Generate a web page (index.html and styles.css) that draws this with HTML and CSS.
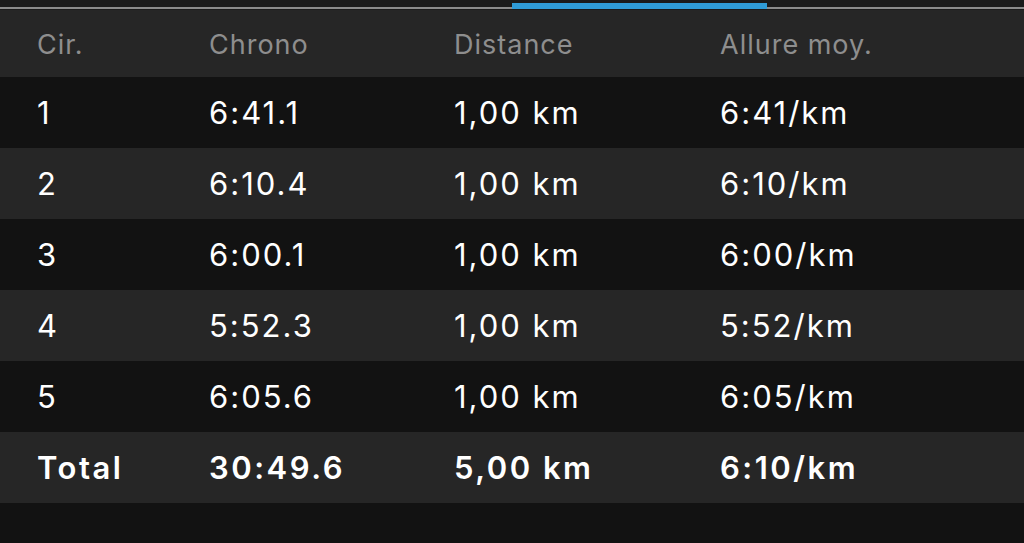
FILE: index.html
```html
<!DOCTYPE html>
<html lang="fr">
<head>
    <meta charset="UTF-8">
    <meta name="viewport" content="width=device-width, initial-scale=1.0">
    <title>Circuits</title>
    <link rel="stylesheet" href="styles.css">
</head>
<body>
    <div class="tabs">
        <div class="tab-line"></div>
        <div class="tab-active"></div>
    </div>
    <div class="laps">
        <div class="lap-row head">
            <span>Cir.</span>
            <span>Chrono</span>
            <span>Distance</span>
            <span>Allure moy.</span>
        </div>
        <div class="lap-row dark">
            <span>1</span>
            <span>6:41.1</span>
            <span>1,00 km</span>
            <span>6:41/km</span>
        </div>
        <div class="lap-row light">
            <span>2</span>
            <span>6:10.4</span>
            <span>1,00 km</span>
            <span>6:10/km</span>
        </div>
        <div class="lap-row dark">
            <span>3</span>
            <span>6:00.1</span>
            <span>1,00 km</span>
            <span>6:00/km</span>
        </div>
        <div class="lap-row light">
            <span>4</span>
            <span>5:52.3</span>
            <span>1,00 km</span>
            <span>5:52/km</span>
        </div>
        <div class="lap-row dark">
            <span>5</span>
            <span>6:05.6</span>
            <span>1,00 km</span>
            <span>6:05/km</span>
        </div>
        <div class="lap-row light total">
            <span>Total</span>
            <span>30:49.6</span>
            <span>5,00 km</span>
            <span>6:10/km</span>
        </div>
    </div>
</body>
</html>
```

FILE: styles.css
```css
body {
    margin: 0;
    background-color: #121212;
    font-family: Inter, "Liberation Sans", sans-serif;
    color: #fff;
    width: 1024px;
    height: 543px;
    overflow: hidden;
}

.tabs {
    position: relative;
    height: 10px;
    background-color: #1a1a1a;
}

.tab-line {
    position: absolute;
    left: 0;
    right: 0;
    top: 7px;
    height: 2px;
    background-color: #8a8a8a;
}

.tab-active {
    position: absolute;
    left: 512px;
    width: 255px;
    top: 3px;
    height: 6px;
    background-color: #2f9bd6;
}

.lap-row {
    display: grid;
    grid-template-columns: 172px 245px 266px 1fr;
    align-items: center;
    height: 71px;
    padding-left: 37px;
    font-size: 31px;
    letter-spacing: 2px;
}

.lap-row.head {
    height: 67px;
    padding-top: 1px;
    box-sizing: border-box;
    background-color: #262626;
    color: #8e8e8e;
    font-size: 27px;
    letter-spacing: 1px;
}

.dark {
    background-color: #121212;
}

.light {
    background-color: #262626;
}

.total {
    font-weight: 600;
    letter-spacing: 2.5px;
}
```
